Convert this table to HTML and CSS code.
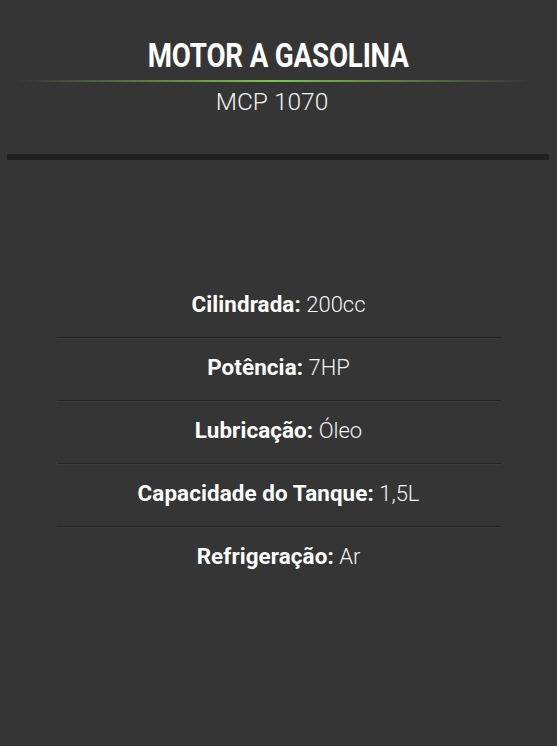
FILE: index.html
```html
<!DOCTYPE html>
<html lang="pt-BR">
<head>
<meta charset="utf-8">
<title>Motor a Gasolina</title>
<link rel="stylesheet" href="styles.css">
</head>
<body>
<main class="page">
  <header class="head">
    <h1 class="title"><span class="title-text">MOTOR A GASOLINA</span></h1>
    <div class="glow"></div>
    <p class="model">MCP 1070</p>
  </header>
  <div class="bar"></div>
  <ul class="specs">
    <li class="spec"><strong>Cilindrada:</strong> 200cc</li>
    <li class="spec"><strong>Potência:</strong> 7HP</li>
    <li class="spec"><strong>Lubricação:</strong> Óleo</li>
    <li class="spec"><strong>Capacidade do Tanque:</strong> 1,5L</li>
    <li class="spec"><strong>Refrigeração:</strong> Ar</li>
  </ul>
</main>
</body>
</html>
```
FILE: styles.css
```css
* { box-sizing: border-box; }
html, body { margin: 0; padding: 0; }
body {
  background: #353535;
  color: #ffffff;
  font-family: Roboto, "Liberation Sans", sans-serif;
  width: 557px;
  height: 746px;
  overflow: hidden;
}
.page {
  display: flex;
  flex-direction: column;
  padding-top: 35px;
}
.head {
  display: flex;
  flex-direction: column;
  align-items: center;
}
.title {
  margin: 0;
  font-size: 34px;
  font-weight: 700;
  line-height: 40px;
  text-align: center;
  white-space: nowrap;
}
.title-text {
  display: inline-block;
  transform: scaleX(0.815);
  transform-origin: center;
  letter-spacing: -0.2px;
}
.glow {
  width: 518px;
  height: 2px;
  margin-top: 5px;
  margin-right: 9px;
  background: linear-gradient(to right, rgba(122,201,67,0) 0%, rgba(122,180,67,0.45) 20%, #7ac943 50%, rgba(122,180,67,0.45) 80%, rgba(122,201,67,0) 100%);
}
.model {
  margin: 5px 13px 0 0;
  font-size: 24.5px;
  font-weight: 300;
  line-height: 30px;
  color: #f2f2f2;
}
.bar {
  margin: 37px 8px 0 7px;
  height: 6px;
  background: #222222;
}
.specs {
  list-style: none;
  margin: 115px auto 0;
  padding: 0;
  width: 444px;
  display: flex;
  flex-direction: column;
}
.spec {
  padding: 16px 0 19px;
  font-size: 22px;
  line-height: 27px;
  font-weight: 300;
  text-align: center;
  color: #f4f4f4;
  border-bottom: 1px solid #242424;
  box-shadow: 0 1px 0 rgba(255,255,255,0.03);
}
.spec:last-child { border-bottom: none; box-shadow: none; }
.spec strong {
  font-size: 22.4px;
  font-weight: 700;
  color: #ffffff;
  letter-spacing: 0.1px;
}
```
